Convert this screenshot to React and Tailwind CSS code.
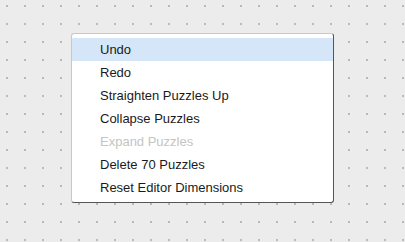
import React from 'react';

const items = [
  { label: 'Undo', active: true },
  { label: 'Redo' },
  { label: 'Straighten Puzzles Up' },
  { label: 'Collapse Puzzles' },
  { label: 'Expand Puzzles', disabled: true },
  { label: 'Delete 70 Puzzles' },
  { label: 'Reset Editor Dimensions' },
];

const App = () => (
  <div className="h-[242px] w-full overflow-hidden bg-[#ececec] bg-[radial-gradient(circle,#b8b8b8_0.7px,transparent_1.3px)] bg-size-[18px_18px] bg-position-[-2px_-3px] pt-[33px] pl-[71px] font-['Liberation_Sans',Arial,sans-serif]">
    <div className="w-[263px] bg-white rounded-[3px] border border-[#c8c8c8] border-r-[#555] border-b-[#555] pt-[4px] pb-[3px]">
      <ul>
        {items.map((it) => (
          <li
            key={it.label}
            className={`h-[23px] flex items-center pl-[28px] text-[13px] ${
              it.active ? 'bg-[#d4e6f7]' : ''
            } ${it.disabled ? 'text-[#c4c4c4]' : 'text-[#1a1a1a]'}`}
          >
            {it.label}
          </li>
        ))}
      </ul>
    </div>
  </div>
);

export default App;
